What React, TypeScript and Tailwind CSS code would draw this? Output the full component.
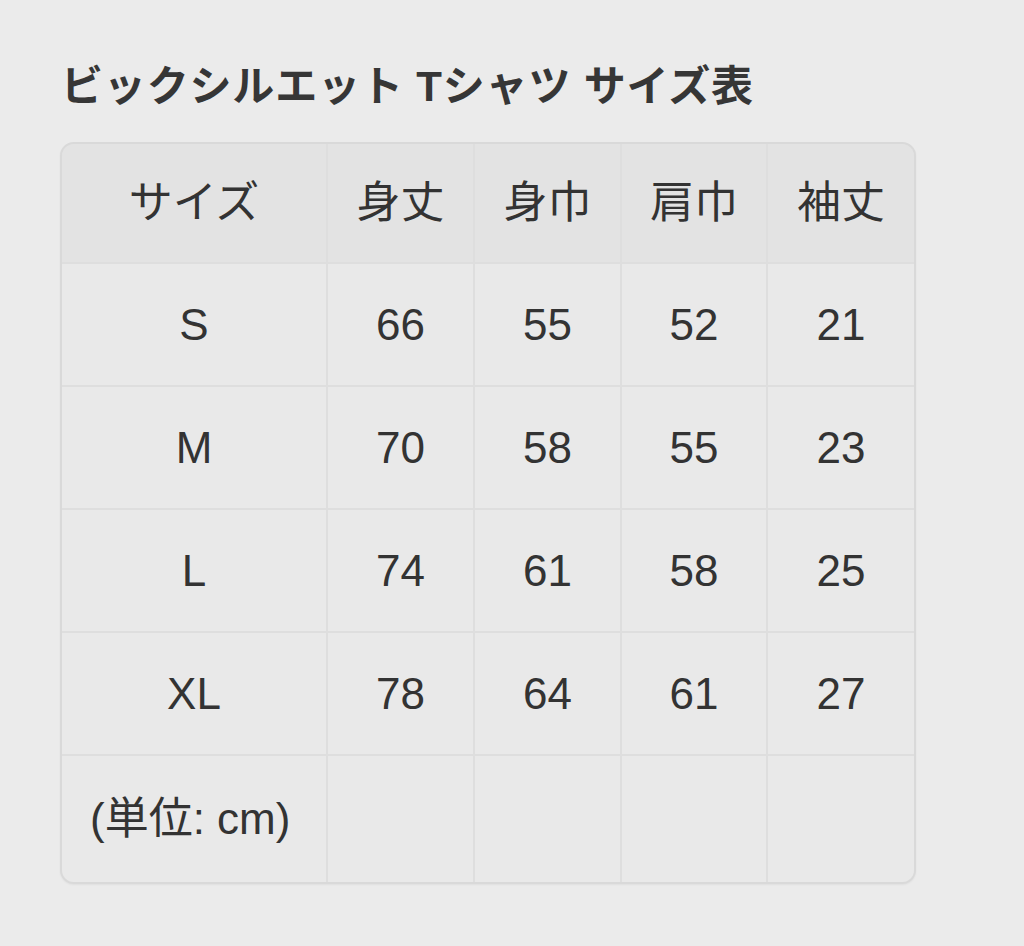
const headers = ["サイズ", "身丈", "身巾", "肩巾", "袖丈"];

const rows = [
  ["S", "66", "55", "52", "21"],
  ["M", "70", "58", "55", "23"],
  ["L", "74", "61", "58", "25"],
  ["XL", "78", "64", "61", "27"],
];

const font = {
  fontFamily: '"Liberation Sans", "Noto Sans CJK JP", sans-serif',
};

export default function App() {
  return (
    <div
      className="min-h-[946px] w-[1024px] bg-[#ebebeb] pl-[60px] pt-[61px] text-[#333333]"
      style={font}
    >
      <h1 className="pl-[1px] text-[42px] font-bold leading-[52px] tracking-[0.02em] text-[#363636]">
        ビックシルエット Tシャツ サイズ表
      </h1>

      <div className="mt-[29px] w-[856px] overflow-hidden rounded-[14px] border-2 border-[#d9d9d9] bg-[#dedede] shadow-[0_1px_2px_rgba(0,0,0,0.05)]">
        <div className="grid grid-cols-[264px_145px_145px_144px_146px] gap-[2px]">
          {headers.map((h) => (
            <div
              key={h}
              className="flex h-[118px] items-center justify-center bg-[#e3e3e3] text-[44px] font-normal"
            >
              {h}
            </div>
          ))}

          {rows.map((row) =>
            row.map((cell, i) => (
              <div
                key={row[0] + i}
                className="flex h-[121px] items-center justify-center bg-[#e9e9e9] text-[44px]"
              >
                {cell}
              </div>
            ))
          )}

          <div className="flex h-[126px] items-center bg-[#e9e9e9] pl-[28px] text-[44px]">
            (単位: cm)
          </div>
          <div className="bg-[#e9e9e9]" />
          <div className="bg-[#e9e9e9]" />
          <div className="bg-[#e9e9e9]" />
          <div className="bg-[#e9e9e9]" />
        </div>
      </div>
    </div>
  );
}
